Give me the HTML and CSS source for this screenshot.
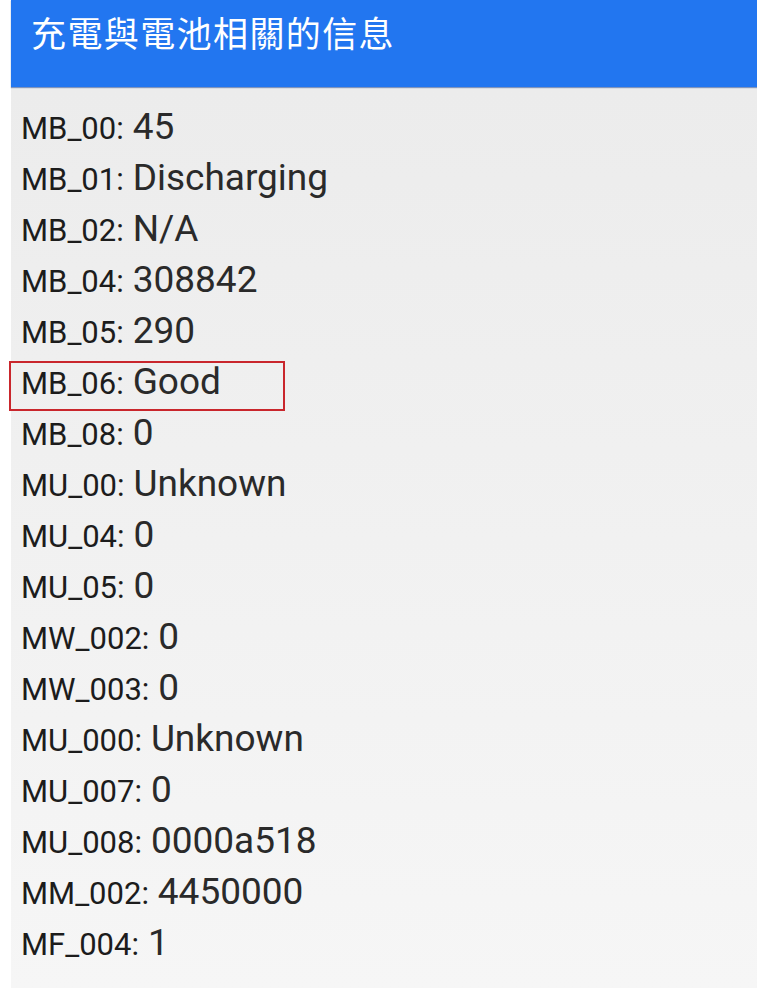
FILE: index.html
```html
<!DOCTYPE html>
<html lang="zh-Hant">
<head>
<meta charset="utf-8">
<title>充電與電池相關的信息</title>
<link rel="stylesheet" href="styles.css">
</head>
<body>
<div class="screen">
  <header class="appbar">
    <h1 class="title">充電與電池相關的信息</h1>
  </header>
  <main class="list">
    <div class="row"><span class="key">MB_00:</span> <span class="val">45</span></div>
    <div class="row"><span class="key">MB_01:</span> <span class="val">Discharging</span></div>
    <div class="row"><span class="key">MB_02:</span> <span class="val">N/A</span></div>
    <div class="row"><span class="key">MB_04:</span> <span class="val">308842</span></div>
    <div class="row"><span class="key">MB_05:</span> <span class="val">290</span></div>
    <div class="row highlighted"><span class="key">MB_06:</span> <span class="val">Good</span><span class="mark"></span></div>
    <div class="row"><span class="key">MB_08:</span> <span class="val">0</span></div>
    <div class="row"><span class="key">MU_00:</span> <span class="val">Unknown</span></div>
    <div class="row"><span class="key">MU_04:</span> <span class="val">0</span></div>
    <div class="row"><span class="key">MU_05:</span> <span class="val">0</span></div>
    <div class="row"><span class="key">MW_002:</span> <span class="val">0</span></div>
    <div class="row"><span class="key">MW_003:</span> <span class="val">0</span></div>
    <div class="row"><span class="key">MU_000:</span> <span class="val">Unknown</span></div>
    <div class="row"><span class="key">MU_007:</span> <span class="val">0</span></div>
    <div class="row"><span class="key">MU_008:</span> <span class="val">0000a518</span></div>
    <div class="row"><span class="key">MM_002:</span> <span class="val">4450000</span></div>
    <div class="row"><span class="key">MF_004:</span> <span class="val">1</span></div>
  </main>
</div>
</body>
</html>
```
FILE: styles.css
```css
html, body {
  margin: 0;
  padding: 0;
  background: #ffffff;
  height: 100%;
  overflow: hidden;
}
.screen {
  margin-left: 11px;
  height: 988px;
  display: flex;
  flex-direction: column;
  background: linear-gradient(#ebebeb, #f6f6f6);
  font-family: Roboto, "Noto Sans", sans-serif;
}
.appbar {
  height: 87px;
  flex: none;
  background: #2276f0;
  box-shadow: 0 1px 1px rgba(20, 60, 140, 0.5);
  display: flex;
  align-items: flex-start;
  padding-left: 20px;
}
.title {
  margin: 0;
  margin-top: 10px;
  color: #ffffff;
  font-family: "Noto Sans CJK TC", "Noto Sans CJK SC", sans-serif;
  font-weight: 400;
  font-size: 35px;
  line-height: 44px;
  letter-spacing: 1.4px;
}
.list {
  padding-top: 14px;
  padding-left: 10px;
  display: flex;
  flex-direction: column;
}
.row {
  position: relative;
  height: 51px;
  line-height: 51px;
  font-size: 36px;
  color: #222222;
  white-space: nowrap;
}
.key {
  font-size: 31px;
  color: #1c1c1c;
}
.val {
  font-size: 37px;
  font-weight: 400;
  color: #2a2a2a;
}
.mark {
  position: absolute;
  left: -12px;
  top: 5px;
  width: 272px;
  height: 46px;
  border: 2px solid #c9262c;
}
```
